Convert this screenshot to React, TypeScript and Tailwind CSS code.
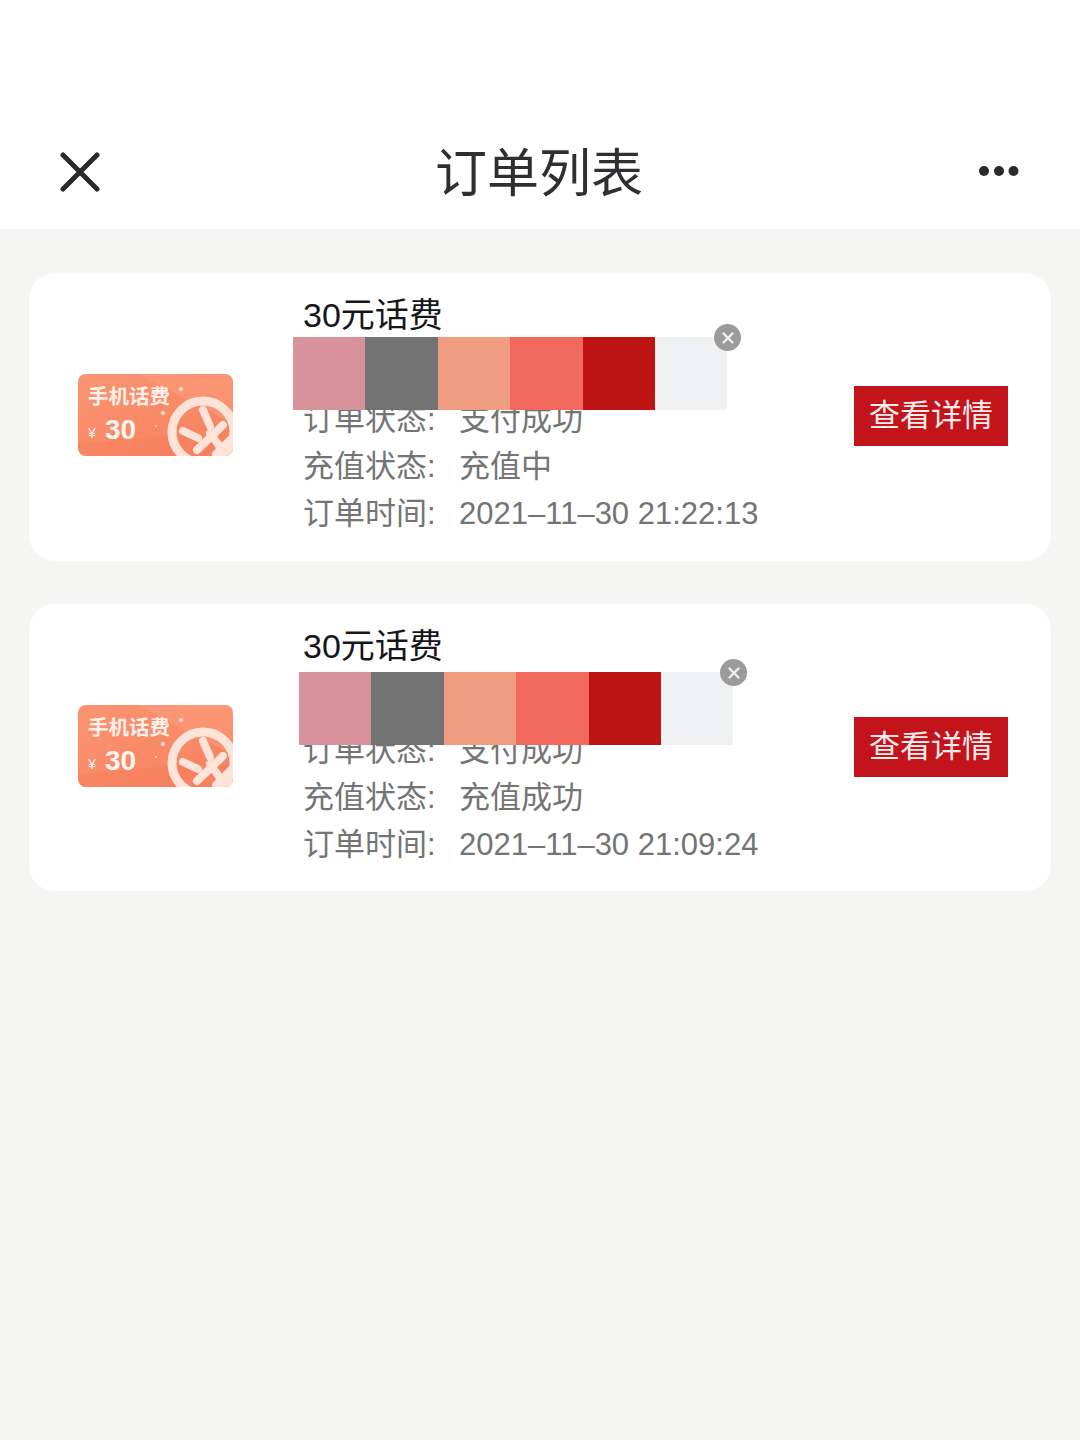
const font = "font-['Liberation_Sans','Noto_Sans_CJK_SC',sans-serif]";

function Ticket() {
  return (
    <div className="relative mb-[3.5px] h-[82px] w-[155px] shrink-0 overflow-hidden rounded-[8px] bg-gradient-to-br from-[#fa9472] via-[#f98a68] to-[#f57e5d]">
      <svg viewBox="0 0 155 82" className="absolute inset-0 h-full w-full blur-[0.4px]">
        <path d="M60 0 L155 0 L155 50 Z" fill="#fca283" opacity="0.45" />
        <path d="M0 82 L0 70 L120 58 L100 82 Z" fill="#f77f5c" opacity="0.45" />
        <circle cx="125" cy="58" r="31" fill="none" stroke="#fde3d8" strokeWidth="9" />
        <g stroke="#fde3d8" strokeWidth="8" strokeLinecap="round" fill="none">
          <path d="M105 57 L120 64" />
          <path d="M125 36 L132 52" />
          <path d="M119 76 L145 51" />
          <path d="M138 80 L155 63" />
          <path d="M132 59 L150 84" />
        </g>
        <circle cx="103" cy="15" r="2" fill="#fde6dc" />
        <circle cx="85" cy="39" r="2" fill="#fde6dc" />
        <circle cx="78" cy="52" r="1" fill="#fde6dc" />
      </svg>
      <span className="absolute left-[10px] top-[9px] text-[20.5px] leading-[27px] font-bold text-[#fff1ea]">手机话费</span>
      <span className="absolute left-[10px] top-[51px] text-[14px] leading-[16px] text-[#fff1ea]">¥</span>
      <span className="absolute left-[27px] top-[36px] text-[28px] leading-[39px] font-bold text-[#fff6f1]">30</span>
    </div>
  );
}

function Strip({ className }: { className: string }) {
  const colors = ["bg-[#d8929b]", "bg-[#737373]", "bg-[#f09c80]", "bg-[#f1695c]", "bg-[#bf1414]", "bg-[#f0f1f3]"];
  return (
    <div className={`absolute flex h-[73px] ${className}`}>
      {colors.map((c) => (
        <div key={c} className={`h-full w-[72.4px] ${c}`} />
      ))}
      <div className="absolute right-[-14px] top-[-13px] flex h-[27px] w-[27px] items-center justify-center rounded-full bg-[#9b9b9b]">
        <svg viewBox="0 0 14 14" className="h-[14px] w-[14px]" fill="none" stroke="#f0f0f0" strokeWidth="2.4" strokeLinecap="round">
          <path d="M2.5 2.5 L11.5 11.5 M11.5 2.5 L2.5 11.5" />
        </svg>
      </div>
    </div>
  );
}

function Card({ status, time, strip }: { status: string; time: string; strip: string }) {
  const rows = [
    ["订单状态:", "支付成功"],
    ["充值状态:", status],
    ["订单时间:", time],
  ];
  return (
    <div className="relative flex h-[287.5px] items-center rounded-[26px] bg-white pl-[49px] pr-[43px]">
      <Ticket />
      <div className="ml-[70px] min-w-0 flex-1 self-start pt-[19px]">
        <div className="text-[34px] leading-[47px] text-[#16161a]">30元话费</div>
        <div className="h-[57px]" />
        {rows.map(([k, v]) => (
          <div key={k} className="flex text-[31px] leading-[47px] text-[#747474]">
            <span className="w-[156px] shrink-0">{k}</span>
            <span className="whitespace-nowrap">{v}</span>
          </div>
        ))}
      </div>
      <div className="mb-[1.5px] flex h-[60px] w-[154px] shrink-0 items-center justify-center bg-[#c2141a] pb-[1px] text-[31px] leading-none text-[#fdeceb]">查看详情</div>
      <Strip className={strip} />
    </div>
  );
}

export default function App() {
  return (
    <div className={`flex min-h-[1440px] w-[1080px] flex-col bg-[#f5f5f3] ${font}`}>
      <header className="flex h-[229px] items-center justify-between bg-white pl-[60px] pr-[60px] pt-[115px]">
        <svg viewBox="0 0 40 40" className="h-[40px] w-[40px]" fill="none" stroke="#2a2a2e" strokeWidth="5" strokeLinecap="round">
          <path d="M3 3 L37 37 M37 3 L3 37" />
        </svg>
        <h1 className="mt-[3px] text-[52px] leading-[70px] font-normal text-[#2f2f33]">订单列表</h1>
        <svg viewBox="0 0 42 12" className="mb-[2px] h-[12px] w-[42px]" fill="#2a2a2e">
          <circle cx="6" cy="6" r="5" />
          <circle cx="21" cy="6" r="5" />
          <circle cx="35.5" cy="6" r="5" />
        </svg>
      </header>
      <main className="flex flex-col gap-[43px] pl-[29px] pr-[29px] pt-[44px]">
        <Card status="充值中" time="2021–11–30 21:22:13" strip="left-[264px] top-[64px]" />
        <Card status="充值成功" time="2021–11–30 21:09:24" strip="left-[270px] top-[68.5px]" />
      </main>
    </div>
  );
}
